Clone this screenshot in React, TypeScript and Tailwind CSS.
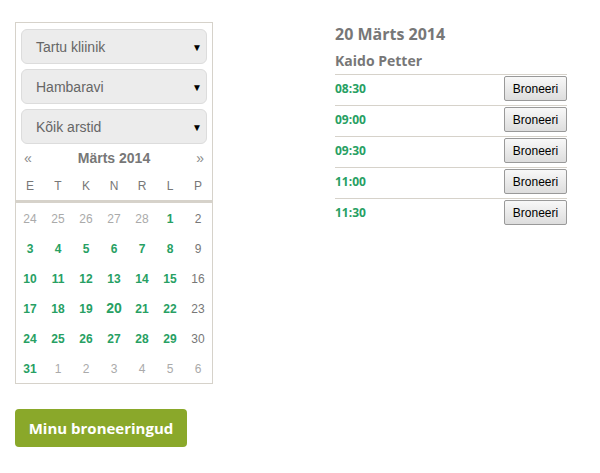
import React from "react";

const selects = ["Tartu kliinik", "Hambaravi", "Kõik arstid"];
const heads = ["E", "T", "K", "N", "R", "L", "P"];

type Day = { n: number; kind: "other" | "free" | "sun" | "today" };

const weeks: Day[][] = [
  [
    { n: 24, kind: "other" },
    { n: 25, kind: "other" },
    { n: 26, kind: "other" },
    { n: 27, kind: "other" },
    { n: 28, kind: "other" },
    { n: 1, kind: "free" },
    { n: 2, kind: "sun" },
  ],
  [3, 4, 5, 6, 7, 8].map((n) => ({ n, kind: "free" as const })).concat([{ n: 9, kind: "sun" }]),
  [10, 11, 12, 13, 14, 15].map((n) => ({ n, kind: "free" as const })).concat([{ n: 16, kind: "sun" }]),
  [
    { n: 17, kind: "free" },
    { n: 18, kind: "free" },
    { n: 19, kind: "free" },
    { n: 20, kind: "today" },
    { n: 21, kind: "free" },
    { n: 22, kind: "free" },
    { n: 23, kind: "sun" },
  ],
  [24, 25, 26, 27, 28, 29].map((n) => ({ n, kind: "free" as const })).concat([{ n: 30, kind: "sun" }]),
  [
    { n: 31, kind: "free" },
    { n: 1, kind: "other" },
    { n: 2, kind: "other" },
    { n: 3, kind: "other" },
    { n: 4, kind: "other" },
    { n: 5, kind: "other" },
    { n: 6, kind: "other" },
  ],
];

const times = ["08:30", "09:00", "09:30", "11:00", "11:30"];

function dayClass(kind: Day["kind"]) {
  if (kind === "free") return "font-bold text-[#27a063] text-[12px]";
  if (kind === "today") return "font-bold text-[#27a063] text-[14px]";
  if (kind === "sun") return "text-[#777] text-[12px]";
  return "text-[#aaa] text-[12px]";
}

export default function App() {
  return (
    <div className="flex w-[600px] h-[473px] bg-white pt-[22px] pl-[15px] font-['Liberation_Sans',Arial,sans-serif]">
      <div className="flex flex-col w-[198px]">
        <div className="border border-[#d6d2ca]">
          <div className="flex flex-col gap-[5px] px-[5px] pt-[6px]">
            {selects.map((s) => (
              <div
                key={s}
                className="flex items-center justify-between h-[35px] rounded-[6px] border border-[#dcdcdc] bg-[#ececec] pl-[14px] pr-[4px] pt-[1px] text-[14px] text-[#666]"
              >
                <span>{s}</span>
                <span className="text-[10px] text-black">▼</span>
              </div>
            ))}
          </div>
          <div className="flex items-center justify-between h-[26px] px-[8px] pt-[2px] text-[#777]">
            <span className="text-[14px] text-[#8a8a8a]">«</span>
            <span className="font-bold text-[14px]">Märts 2014</span>
            <span className="text-[14px] text-[#8a8a8a]">»</span>
          </div>
          <div className="grid grid-cols-7 h-[30px] pt-[1px] items-center text-center text-[12px] text-[#777]">
            {heads.map((h) => (
              <span key={h}>{h}</span>
            ))}
          </div>
          <div className="h-[3px] bg-[#d6d2ca]" />
          {weeks.map((w, i) => (
            <div key={i} className="grid grid-cols-7 h-[30px] pt-[1px] items-center text-center">
              {w.map((d, j) => (
                <span key={j} className={dayClass(d.kind)}>
                  {d.n}
                </span>
              ))}
            </div>
          ))}
        </div>
        <button className="mt-[25px] w-[172px] h-[38px] rounded-[4px] bg-[#8aa82a] text-white font-bold text-[15px] font-['Open_Sans',sans-serif]">
          Minu broneeringud
        </button>
      </div>
      <div className="ml-[122px] w-[232px] font-['Open_Sans',sans-serif] text-[#777]">
        <div className="font-bold text-[16px] leading-[22px] mt-[1px]">20 Märts 2014</div>
        <div className="font-bold text-[14px] leading-[20px] mt-[6px]">Kaido Petter</div>
        <div className="mt-[3px]">
          {times.map((t) => (
            <div key={t} className="flex items-center justify-between h-[31px] pb-[3px] border-t border-[#d6d2ca]">
              <span className="font-bold text-[12px] text-[#27a063]">{t}</span>
              <button className="h-[25px] w-[63px] rounded-[2px] border border-[#999] bg-gradient-to-b from-[#f8f8f8] to-[#dddddd] text-[12px] text-black font-['Liberation_Sans',Arial,sans-serif]">
                Broneeri
              </button>
            </div>
          ))}
        </div>
      </div>
    </div>
  );
}
